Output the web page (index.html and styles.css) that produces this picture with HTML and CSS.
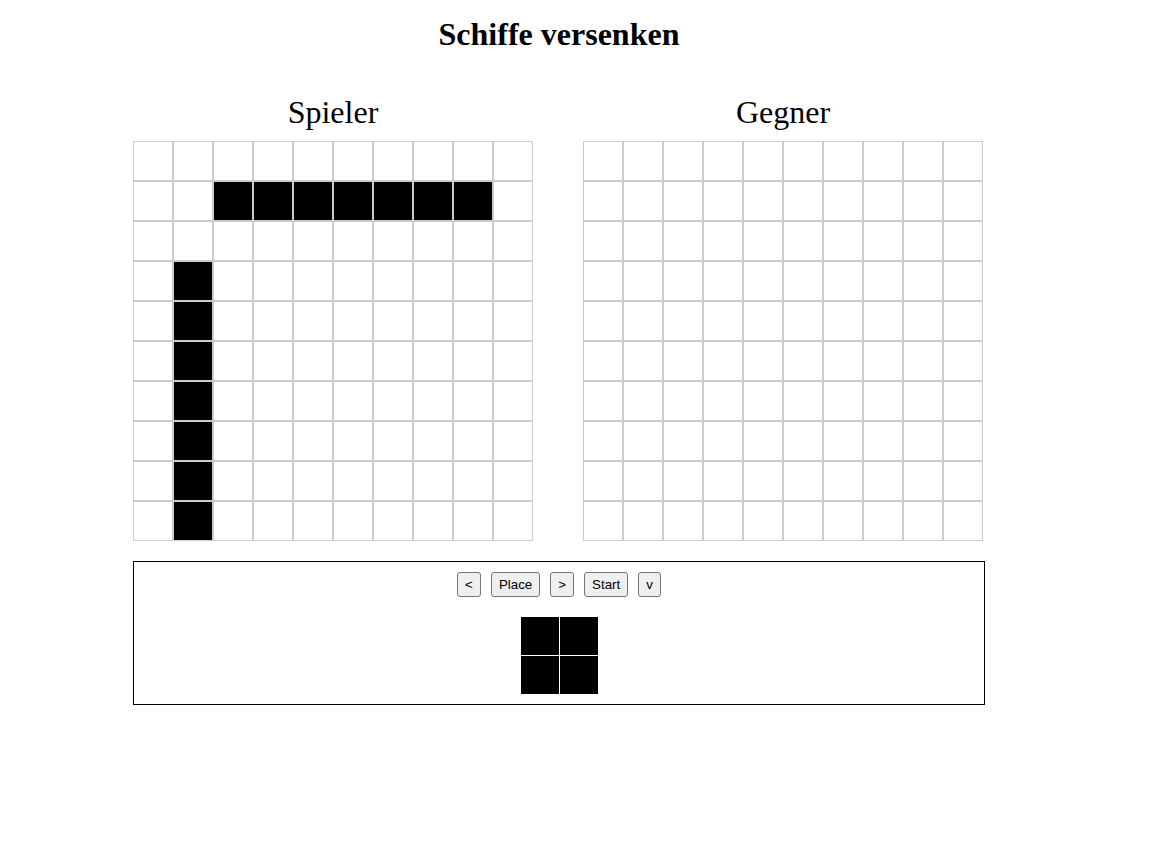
FILE: index.html
```
<!DOCTYPE html>
<html lang="de">
<head>
<meta charset="utf-8">
<title>Schiffe versenken</title>
<link rel="stylesheet" href="styles.css">
</head>
<body>
<div class="page">
  <h1 class="title">Schiffe versenken</h1>
  <div class="boards">
    <section class="board">
      <h2 class="board-title">Spieler</h2>
      <div class="grid">
        <div class="cell"></div><div class="cell"></div><div class="cell"></div><div class="cell"></div><div class="cell"></div><div class="cell"></div><div class="cell"></div><div class="cell"></div><div class="cell"></div><div class="cell"></div>
        <div class="cell"></div><div class="cell"></div><div class="cell ship"></div><div class="cell ship"></div><div class="cell ship"></div><div class="cell ship"></div><div class="cell ship"></div><div class="cell ship"></div><div class="cell ship"></div><div class="cell"></div>
        <div class="cell"></div><div class="cell"></div><div class="cell"></div><div class="cell"></div><div class="cell"></div><div class="cell"></div><div class="cell"></div><div class="cell"></div><div class="cell"></div><div class="cell"></div>
        <div class="cell"></div><div class="cell ship"></div><div class="cell"></div><div class="cell"></div><div class="cell"></div><div class="cell"></div><div class="cell"></div><div class="cell"></div><div class="cell"></div><div class="cell"></div>
        <div class="cell"></div><div class="cell ship"></div><div class="cell"></div><div class="cell"></div><div class="cell"></div><div class="cell"></div><div class="cell"></div><div class="cell"></div><div class="cell"></div><div class="cell"></div>
        <div class="cell"></div><div class="cell ship"></div><div class="cell"></div><div class="cell"></div><div class="cell"></div><div class="cell"></div><div class="cell"></div><div class="cell"></div><div class="cell"></div><div class="cell"></div>
        <div class="cell"></div><div class="cell ship"></div><div class="cell"></div><div class="cell"></div><div class="cell"></div><div class="cell"></div><div class="cell"></div><div class="cell"></div><div class="cell"></div><div class="cell"></div>
        <div class="cell"></div><div class="cell ship"></div><div class="cell"></div><div class="cell"></div><div class="cell"></div><div class="cell"></div><div class="cell"></div><div class="cell"></div><div class="cell"></div><div class="cell"></div>
        <div class="cell"></div><div class="cell ship"></div><div class="cell"></div><div class="cell"></div><div class="cell"></div><div class="cell"></div><div class="cell"></div><div class="cell"></div><div class="cell"></div><div class="cell"></div>
        <div class="cell"></div><div class="cell ship"></div><div class="cell"></div><div class="cell"></div><div class="cell"></div><div class="cell"></div><div class="cell"></div><div class="cell"></div><div class="cell"></div><div class="cell"></div>
      </div>
    </section>
    <section class="board">
      <h2 class="board-title">Gegner</h2>
      <div class="grid">
        <div class="cell"></div><div class="cell"></div><div class="cell"></div><div class="cell"></div><div class="cell"></div><div class="cell"></div><div class="cell"></div><div class="cell"></div><div class="cell"></div><div class="cell"></div>
        <div class="cell"></div><div class="cell"></div><div class="cell"></div><div class="cell"></div><div class="cell"></div><div class="cell"></div><div class="cell"></div><div class="cell"></div><div class="cell"></div><div class="cell"></div>
        <div class="cell"></div><div class="cell"></div><div class="cell"></div><div class="cell"></div><div class="cell"></div><div class="cell"></div><div class="cell"></div><div class="cell"></div><div class="cell"></div><div class="cell"></div>
        <div class="cell"></div><div class="cell"></div><div class="cell"></div><div class="cell"></div><div class="cell"></div><div class="cell"></div><div class="cell"></div><div class="cell"></div><div class="cell"></div><div class="cell"></div>
        <div class="cell"></div><div class="cell"></div><div class="cell"></div><div class="cell"></div><div class="cell"></div><div class="cell"></div><div class="cell"></div><div class="cell"></div><div class="cell"></div><div class="cell"></div>
        <div class="cell"></div><div class="cell"></div><div class="cell"></div><div class="cell"></div><div class="cell"></div><div class="cell"></div><div class="cell"></div><div class="cell"></div><div class="cell"></div><div class="cell"></div>
        <div class="cell"></div><div class="cell"></div><div class="cell"></div><div class="cell"></div><div class="cell"></div><div class="cell"></div><div class="cell"></div><div class="cell"></div><div class="cell"></div><div class="cell"></div>
        <div class="cell"></div><div class="cell"></div><div class="cell"></div><div class="cell"></div><div class="cell"></div><div class="cell"></div><div class="cell"></div><div class="cell"></div><div class="cell"></div><div class="cell"></div>
        <div class="cell"></div><div class="cell"></div><div class="cell"></div><div class="cell"></div><div class="cell"></div><div class="cell"></div><div class="cell"></div><div class="cell"></div><div class="cell"></div><div class="cell"></div>
        <div class="cell"></div><div class="cell"></div><div class="cell"></div><div class="cell"></div><div class="cell"></div><div class="cell"></div><div class="cell"></div><div class="cell"></div><div class="cell"></div><div class="cell"></div>
      </div>
    </section>
  </div>
  <div class="controls">
    <div class="buttons">
      <button class="btn" type="button">&lt;</button>
      <button class="btn" type="button">Place</button>
      <button class="btn" type="button">&gt;</button>
      <button class="btn" type="button">Start</button>
      <button class="btn" type="button">v</button>
    </div>
    <div class="preview">
      <div class="preview-cell"></div><div class="preview-cell"></div>
      <div class="preview-cell"></div><div class="preview-cell"></div>
    </div>
  </div>
</div>
</body>
</html>
```
FILE: styles.css
```
html, body {
  margin: 0;
  padding: 0;
  background: #fff;
}

body {
  font-family: "Liberation Serif", "Times New Roman", serif;
  color: #000;
}

.page {
  width: 852px;
  margin-left: 133px;
  padding-top: 16px;
}

.title {
  margin: 0;
  font-size: 32px;
  line-height: 36px;
  font-weight: bold;
  text-align: center;
}

.boards {
  display: flex;
  gap: 50px;
  margin-top: 42px;
}

.board {
  width: 400px;
}

.board-title {
  margin: 0 0 11px;
  font-size: 32px;
  line-height: 36px;
  font-weight: normal;
  text-align: center;
}

.grid {
  display: grid;
  grid-template-columns: repeat(10, 40px);
  grid-auto-rows: 40px;
}

.cell {
  box-sizing: border-box;
  border: 1px solid #cccccc;
  background: #fff;
}

.cell.ship {
  background: #000;
}

.controls {
  margin-top: 20px;
  border: 1px solid #000;
  padding: 10px;
  display: flex;
  flex-direction: column;
  align-items: center;
  gap: 20px;
}

.buttons {
  display: flex;
  gap: 10px;
}

.btn {
  font-family: "Liberation Sans", Arial, sans-serif;
  font-size: 13.333px;
  line-height: 15px;
  padding: 4px 7px;
  margin: 0;
  border: 1px solid #767676;
  border-radius: 3px;
  background: #efefef;
  color: #000;
}

.preview {
  display: grid;
  grid-template-columns: repeat(2, 38px);
  grid-auto-rows: 38px;
  gap: 1px;
}

.preview-cell {
  background: #000;
}
```
